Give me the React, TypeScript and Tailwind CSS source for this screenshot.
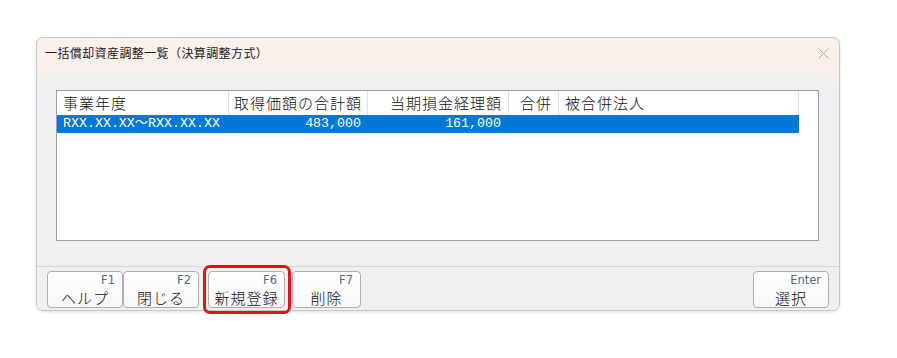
import React from "react";

function FBtn({ k, label, className }: { k: string; label: string; className: string }) {
  return (
    <div
      className={`relative h-[37px] border border-[#b0b0b0] rounded-[4px] bg-gradient-to-b from-white to-[#f7f7f7] flex flex-col shrink-0 ${className}`}
    >
      <div className="text-right pr-[7px] pt-[2px] text-[11.5px] leading-[13px] text-[#4f6a85] font-['DejaVu_Sans',sans-serif]">
        {k}
      </div>
      <div className="mt-[2px] text-center text-[15px] leading-[18px] tracking-[1px] font-light text-[#111] font-['Noto_Sans_CJK_JP',sans-serif]">
        {label}
      </div>
    </div>
  );
}

export default function App() {
  return (
    <div className="w-[897px] h-[358px] bg-white font-['Noto_Sans_CJK_JP',sans-serif]">
      <div className="pl-[36px] pt-[37px]">
        <div className="w-[804px] h-[274px] border border-[#c8c8c8] rounded-[7px] flex flex-col bg-[linear-gradient(to_bottom,#f9f1ec_0px,#f8f0eb_32px,#eef0f4_54px,#f0f0f0_110px)] shadow-[0_1px_3px_rgba(0,0,0,0.12)]">
          {/* Title bar */}
          <div className="h-[30px] flex items-center justify-between pl-[8px] pr-[10px]">
            <span className="text-[12px] leading-[16px] tracking-[0.4px] text-[#1a1a1a]">
              一括償却資産調整一覧（決算調整方式）
            </span>
            <svg width="11" height="11" viewBox="0 0 11 11" className="block">
              <path d="M0.5 0.5 L10.5 10.5 M10.5 0.5 L0.5 10.5" stroke="#ababab" strokeWidth="1" />
            </svg>
          </div>

          {/* Table */}
          <div className="pt-[22px] pl-[19px]">
            <div className="w-[763px] h-[151px] border border-[#a0a0a0] bg-white">
              <div className="grid grid-cols-[172px_139px_141px_50px_240px] h-[24px] items-stretch text-[15px] leading-[24px] tracking-[1px] font-light text-[#111]">
                <div className="border-r border-[#dedede] pl-[6px]">事業年度</div>
                <div className="border-r border-[#dedede] text-right pr-[5px]">取得価額の合計額</div>
                <div className="border-r border-[#dedede] text-right pr-[6px]">当期損金経理額</div>
                <div className="border-r border-[#dedede] text-right pr-[6px]">合併</div>
                <div className="border-r border-[#dedede] pl-[6px]">被合併法人</div>
              </div>
              <div className="grid grid-cols-[172px_139px_141px_50px_240px] h-[18px] w-[742px] bg-[#0078d7] text-white text-[13.3px] leading-[18px] font-['Liberation_Mono','Noto_Sans_CJK_JP',monospace]">
                <div className="pl-[6px]">RXX.XX.XX～RXX.XX.XX</div>
                <div className="text-right pr-[7px]">483,000</div>
                <div className="text-right pr-[8px]">161,000</div>
                <div></div>
                <div></div>
              </div>
            </div>
          </div>

          <div className="flex-1" />

          {/* Footer */}
          <div className="h-[44px] border-t border-[#d6d6d6] flex items-start pt-[4px] pl-[10px] pr-[10px]">
            <FBtn k="F1" label="ヘルプ" className="w-[76px]" />
            <FBtn k="F2" label="閉じる" className="w-[76px]" />
            <div className="relative ml-[9px]">
              <FBtn k="F6" label="新規登録" className="w-[77px]" />
              <span className="absolute -left-[5px] -top-[6px] -right-[6px] -bottom-[6px] border-[3px] border-[#dc1420] rounded-[7px] pointer-events-none" />
            </div>
            <FBtn k="F7" label="削除" className="w-[69px] ml-[7px]" />
            <div className="flex-1" />
            <FBtn k="Enter" label="選択" className="w-[76px]" />
          </div>
        </div>
      </div>
    </div>
  );
}
